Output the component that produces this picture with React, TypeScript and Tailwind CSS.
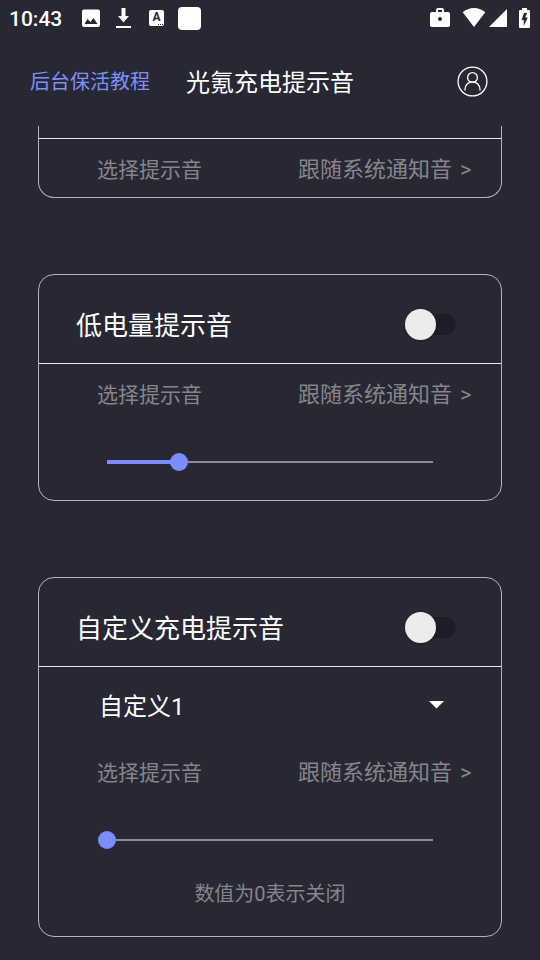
import { useState } from "react";

const StatusBar = () => {
  return (
    <div className="flex h-9 items-center justify-between pl-[9px] pr-[10px]">
      <div className="flex items-center">
        <span className="w-[73px] pt-[2px] text-[21px] leading-none font-medium">
          10:43
        </span>
        <svg width="18" height="18" viewBox="0 0 18 18" fill="currentColor">
          <path
            fillRule="evenodd"
            d="M2 .5h14a2 2 0 0 1 2 2V16a2 2 0 0 1-2 2H2a2 2 0 0 1-2-2V2.500a2 2 0 0 1 2-2zm3.500 9.500L2.500 15h13l-4-6-3 4z"
          />
        </svg>
        <svg
          className="ml-4"
          width="15"
          height="20"
          viewBox="0 0 15 20"
          fill="currentColor"
        >
          <path d="M5.500 0h4v8H13l-5.500 6.500L2 8h3.500zM0 18h15v2H0z" />
        </svg>
        <div className="relative ml-[18px] h-4 w-[15px] rounded-[2px] bg-white text-center text-[12px] leading-[15px] font-bold text-[#282734]">
          A
          <div className="absolute right-px bottom-px flex gap-px">
            <span className="h-px w-px bg-[#282734]" />
            <span className="h-px w-px bg-[#282734]" />
            <span className="h-px w-px bg-[#282734]" />
          </div>
        </div>
        <div className="ml-[14px] h-[23px] w-[23px] rounded-[4px] bg-white" />
      </div>
      <div className="flex items-center pb-px">
        <svg width="20" height="19" viewBox="0 0 20 19" fill="currentColor">
          <path
            fillRule="evenodd"
            d="M8 0h4a2 2 0 0 1 2 2v2h4a2 2 0 0 1 2 2v11a2 2 0 0 1-2 2H2a2 2 0 0 1-2-2V6a2 2 0 0 1 2-2h4V2a2 2 0 0 1 2-2zm0 2v2h4V2zm2 7a2 2 0 1 0 0 4 2 2 0 0 0 0-4z"
          />
        </svg>
        <svg
          className="ml-3"
          width="24"
          height="19"
          viewBox="0 0 24 19"
          fill="currentColor"
        >
          <path d="M12 19 .7 4.300C3.800 1.700 7.700 0 12 0s8.200 1.700 11.300 4.300z" />
        </svg>
        <svg
          className="ml-[3px]"
          width="18"
          height="18"
          viewBox="0 0 18 18"
          fill="currentColor"
        >
          <path d="M18 0v18H0z" />
        </svg>
        <svg
          className="ml-3"
          width="11"
          height="20"
          viewBox="0 0 11 20"
          fill="currentColor"
        >
          <path
            fillRule="evenodd"
            d="M3 0h5v2h2a1 1 0 0 1 1 1v16a1 1 0 0 1-1 1H1a1 1 0 0 1-1-1V3a1 1 0 0 1 1-1h2zm2 5-2.500 7h2.300v6l4-8.500H6.200l2-4.500z"
          />
        </svg>
      </div>
    </div>
  );
};

const Header = () => {
  return (
    <div className="flex h-[90px] items-center pl-[30px]">
      <a className="pt-[2px] text-[20px] leading-none text-[#7d90fa]">
        后台保活教程
      </a>
      <h1 className="ml-9 pt-1 text-[24px] leading-none">光氪充电提示音</h1>
      <svg
        className="ml-[103px]"
        width="31"
        height="31"
        viewBox="0 0 31 31"
        fill="none"
        stroke="currentColor"
        strokeWidth="1.300"
      >
        <circle cx="15.500" cy="15.500" r="14.400" />
        <circle cx="15.500" cy="11.500" r="4.900" />
        <path d="M8 24.500v-1.200a7.500 7.500 0 0 1 15 0v1.200" />
      </svg>
    </div>
  );
};

const Switch = () => {
  const [on, setOn] = useState(false);

  return (
    <button
      className="relative h-[21px] w-[46px] rounded-full bg-[#1e1d27]"
      onClick={() => setOn(!on)}
    >
      <span
        className={
          on
            ? "absolute -top-[5px] -right-[5px] h-[31px] w-[31px] rounded-full bg-[#7b8dfd]"
            : "absolute -top-[5px] -left-[5px] h-[31px] w-[31px] rounded-full bg-[#ececec] shadow-[0_1px_2px_rgba(0,0,0,0.3)]"
        }
      />
    </button>
  );
};

const CardTitle = ({ title }: { title: string }) => {
  return (
    <div className="flex h-[89px] items-center justify-between border-b border-[#e6e6ee] pt-[10px] pr-[45px] pl-[37px]">
      <h2 className="pt-[3px] text-[26px] leading-none">{title}</h2>
      <Switch />
    </div>
  );
};

const SoundRow = () => {
  return (
    <div className="flex h-[60px] items-center justify-between pt-[3px] pr-[29px] pl-[58px] leading-none text-[#86858c]">
      <span className="text-[21px]">选择提示音</span>
      <div className="flex items-center gap-2 pb-[2px] text-[22px]">
        <span>跟随系统通知音</span>
        <span className="w-3">&gt;</span>
      </div>
    </div>
  );
};

const Slider = ({ value }: { value: number }) => {
  return (
    <div className="mr-[68px] ml-[68px] flex h-[76px] items-center">
      <div className="relative flex h-[18px] w-full items-center">
        <div className="h-0.5 w-full bg-[#8d8c94]" />
        <div
          className="absolute left-0 h-1 bg-[#7b8dfd]"
          style={{ width: `${value}%` }}
        />
        <div
          className="absolute -ml-[9px] h-[18px] w-[18px] rounded-full bg-[#7b8dfd]"
          style={{ left: `${value}%` }}
        />
      </div>
    </div>
  );
};

const App = () => {
  return (
    <div className="h-[960px] w-[540px] overflow-hidden bg-[#282734] font-['Roboto','Noto_Sans_CJK_SC',sans-serif] text-white">
      <StatusBar />
      <Header />
      <div className="flex flex-col gap-[76px] px-[38px]">
        <div className="h-[72px] overflow-hidden rounded-b-2xl border border-t-0 border-[#b4b4bd]">
          <div className="h-[13px] border-b border-[#e6e6ee]" />
          <SoundRow />
        </div>
        <div className="h-[227px] rounded-2xl border border-[#b4b4bd]">
          <CardTitle title="低电量提示音" />
          <SoundRow />
          <Slider value={22} />
        </div>
        <div className="h-[360px] rounded-2xl border border-[#b4b4bd]">
          <CardTitle title="自定义充电提示音" />
          <div className="flex h-[75px] items-center justify-between pr-[57px] pl-[60px]">
            <span className="pt-1 text-[24px] leading-none">自定义1</span>
            <svg width="15" height="8" viewBox="0 0 15 8" fill="currentColor">
              <path d="M0 0h15L7.500 7.500z" />
            </svg>
          </div>
          <SoundRow />
          <Slider value={0} />
          <p className="mt-[6px] text-center text-[20px] leading-none text-[#86858c]">
            数值为0表示关闭
          </p>
        </div>
      </div>
    </div>
  );
};

export default App;
